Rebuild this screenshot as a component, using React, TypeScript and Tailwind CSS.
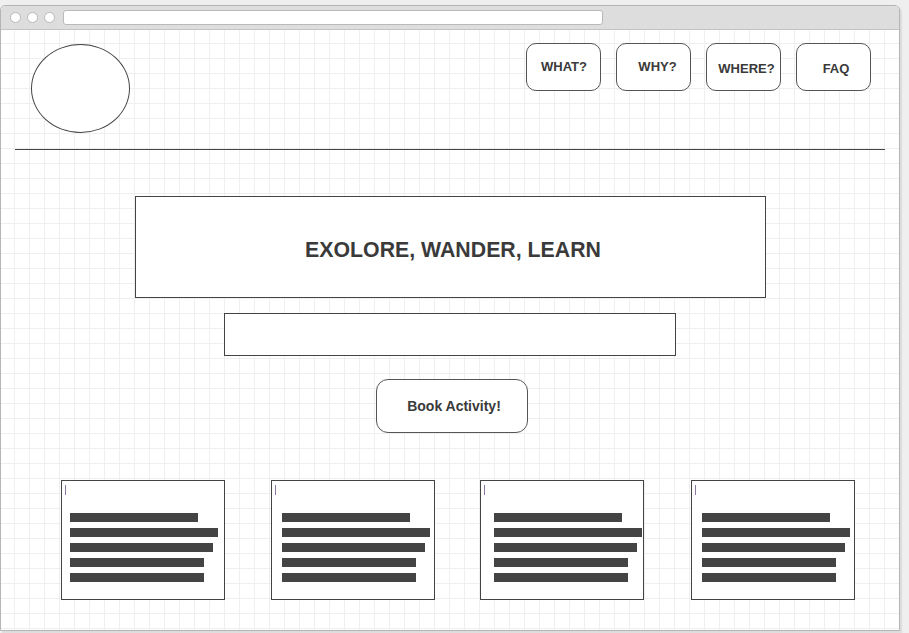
import React from "react";

const navItems = [
  { label: "WHAT?", cls: "pt-[0px] pl-[1px]" },
  { label: "WHY?", cls: "pt-[0px] pl-[8px]" },
  { label: "WHERE?", cls: "pt-[4px] pl-[6px]" },
  { label: "FAQ", cls: "pt-[4px] pl-[5px]" },
];

const cards = [
  { pad: "pl-[8px]", gap: "" },
  { pad: "pl-[10px]", gap: "ml-[46px]" },
  { pad: "pl-[13px]", gap: "ml-[45px]" },
  { pad: "pl-[10px]", gap: "ml-[47px]" },
];

const barWidths = [128, 148, 143, 134, 134];

const App: React.FC = () => {
  return (
    <div
      className="w-[909px] h-[633px] bg-[#efefef] pt-[5px] overflow-hidden"
      style={{ fontFamily: '"Liberation Sans", Arial, sans-serif' }}
    >
      <div className="w-[900px] h-[626px] flex flex-col border border-[#b5b5b5] rounded-t-[5px] bg-white shadow-[2px_2px_1px_#dcdcdc] overflow-hidden">
        {/* browser chrome */}
        <div className="h-[24px] shrink-0 bg-[#dddddd] border-b border-[#c4c4c4] flex items-center pl-[9px] gap-[6px]">
          <span className="w-[11px] h-[11px] rounded-full bg-white border border-[#b9b9b9]" />
          <span className="w-[11px] h-[11px] rounded-full bg-white border border-[#b9b9b9]" />
          <span className="w-[11px] h-[11px] rounded-full bg-white border border-[#b9b9b9]" />
          <div className="ml-[2px] w-[540px] h-[15px] rounded-[3px] bg-white border border-[#b9b9b9]" />
        </div>

        {/* canvas */}
        <div className="flex-1 flex flex-col bg-white bg-[linear-gradient(to_right,#efefef_1px,transparent_1px),linear-gradient(to_bottom,#efefef_1px,transparent_1px)] bg-[size:15px_15px] bg-[position:13px_13px] text-[#3a3a3a]">
          <div className="h-[119px] shrink-0 flex justify-between items-start pt-[13px] pl-[30px] pr-[28px]">
            <div className="mt-[1px] w-[99px] h-[89px] rounded-[50%] border border-[#444] bg-white" />
            <nav className="flex gap-[15px]">
              {navItems.map((n) => (
                <div
                  key={n.label}
                  className={`w-[75px] h-[48px] rounded-[10px] border border-[#555] bg-white flex items-center justify-center text-[13px] font-bold ${n.cls}`}
                >
                  {n.label}
                </div>
              ))}
            </nav>
          </div>

          <div className="mx-[14px] h-px shrink-0 bg-[#444]" />

          <div className="mt-[46px] mx-auto w-[631px] h-[102px] shrink-0 border border-[#444] bg-white flex items-center justify-center pt-[8px] pl-[6px] text-[21.3px] font-bold">
            EXOLORE, WANDER, LEARN
          </div>

          <div className="mt-[15px] ml-[223px] w-[452px] h-[43px] shrink-0 border border-[#444] bg-white" />

          <button className="mt-[23px] ml-[375px] w-[152px] h-[54px] shrink-0 rounded-[12px] border border-[#555] bg-white pl-[4px] text-[14px] font-bold text-[#3a3a3a]">
            Book Activity!
          </button>

          <div className="mt-[47px] ml-[60px] flex">
            {cards.map((c, i) => (
              <div
                key={i}
                className={`relative w-[164px] h-[120px] border border-[#444] bg-white pt-[32px] ${c.pad} ${c.gap} flex flex-col gap-[6px]`}
              >
                <span className="absolute left-[3px] top-[4px] w-px h-[10px] bg-[#8a76a0]" />
                {barWidths.map((w, j) => (
                  <div key={j} className="h-[9px] bg-[#444]" style={{ width: w }} />
                ))}
              </div>
            ))}
          </div>
        </div>
      </div>
    </div>
  );
};

export default App;
